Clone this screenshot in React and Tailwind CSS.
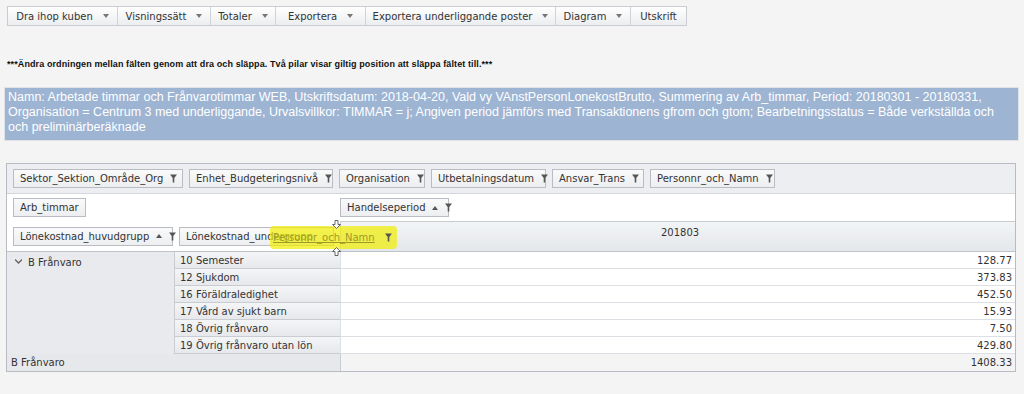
import React from "react";

const FilterIcon = () => (
	<svg width="7" height="9" viewBox="0 0 7 9" className="shrink-0">
		<path d="M0 0.5h7L4.3 4v4.5H2.7V4z" fill="#555" />
	</svg>
);

const SortUp = () => (
	<svg width="6" height="4" viewBox="0 0 6 4" className="shrink-0">
		<path d="M0 4L3 0l3 4z" fill="#555" />
	</svg>
);

const Caret = () => (
	<svg width="6" height="4" viewBox="0 0 6 4" className="shrink-0">
		<path d="M0 0h6L3 4z" fill="#777" />
	</svg>
);

const ToolButton = ({ label, width, menu = true }) => (
	<div
		className={`flex h-full items-center justify-center gap-[10px] border-r border-[#cfd2d6] last:border-r-0 ${width}`}
	>
		<span>{label}</span>
		{menu && <Caret />}
	</div>
);

const Chip = ({ label, sort = false, filter = true, className = "" }) => (
	<div
		className={`flex h-[19px] items-center gap-[7px] border border-[#b9bdc3] bg-gradient-to-b from-[#fafafa] to-[#eceef0] px-[6px] text-[#333] ${className}`}
	>
		<span className="whitespace-nowrap">{label}</span>
		{sort && <SortUp />}
		{filter && <FilterIcon />}
	</div>
);

const rows = [
	["10 Semester", "128.77"],
	["12 Sjukdom", "373.83"],
	["16 Föräldraledighet", "452.50"],
	["17 Vård av sjukt barn", "15.93"],
	["18 Övrig frånvaro", "7.50"],
	["19 Övrig frånvaro utan lön", "429.80"],
];

export default function App() {
	return (
		<div className="h-[394px] w-[1024px] overflow-hidden bg-[#f4f4f4] text-[#222]">
			{/* Toolbar */}
			<div className="pl-[7px] pt-[6px]">
				<div
					className="flex h-[20px] w-fit items-center border border-[#c9ccd0] bg-gradient-to-b from-[#ffffff] to-[#ecedef] text-[10px] text-[#333]"
					style={{ fontFamily: "'DejaVu Sans', sans-serif" }}
				>
					<ToolButton label="Dra ihop kuben" width="w-[110px]" />
					<ToolButton label="Visningssätt" width="w-[93px]" />
					<ToolButton label="Totaler" width="w-[65px]" />
					<ToolButton label="Exportera" width="w-[90px]" />
					<ToolButton label="Exportera underliggande poster" width="w-[190px]" />
					<ToolButton label="Diagram" width="w-[75px]" />
					<ToolButton label="Utskrift" width="w-[55px]" menu={false} />
				</div>
			</div>

			{/* Info */}
			<div
				className="mt-[32px] pl-[7px] text-[9px] font-bold leading-[12px] tracking-[0.1px] text-[#111]"
				style={{ fontFamily: "'Liberation Sans', sans-serif" }}
			>
				***Ändra ordningen mellan fälten genom att dra och släppa. Två pilar visar giltig position att släppa fältet till.***
			</div>

			{/* Description */}
			<div className="mx-[4px] mt-[17px] h-[54px] w-[1015px] border border-[#dfe3e8] bg-[#9db4d3] px-[3px] pt-[2px]">
				<p
					className="text-[12.5px] leading-[15px] text-white"
					style={{ fontFamily: "'Liberation Sans', sans-serif" }}
				>
					Namn: Arbetade timmar och Frånvarotimmar WEB, Utskriftsdatum: 2018-04-20, Vald vy VAnstPersonLonekostBrutto, Summering av Arb_timmar, Period: 20180301 - 20180331, Organisation = Centrum 3 med underliggande, Urvalsvillkor: TIMMAR = j; Angiven period jämförs med Transaktionens gfrom och gtom; Bearbetningsstatus = Både verkställda och och preliminärberäknade
				</p>
			</div>

			{/* Pivot grid */}
			<div
				className="relative ml-[6px] mt-[22px] w-[1010px] border border-[#b8bcc2] text-[10px] text-[#333]"
				style={{ fontFamily: "'DejaVu Sans', sans-serif" }}
			>
				{/* Filter fields */}
				<div className="flex h-[30px] items-center gap-[6px] border-b border-[#d3d6da] bg-[#eceef1] px-[6px]">
					<Chip label="Sektor_Sektion_Område_Org" className="w-[170px] justify-between" />
					<Chip label="Enhet_Budgeteringsnivå" className="w-[144px] justify-between" />
					<Chip label="Organisation" className="w-[86px] justify-between" />
					<Chip label="Utbetalningsdatum" className="w-[115px] justify-between" />
					<Chip label="Ansvar_Trans" className="w-[92px] justify-between" />
					<Chip label="Personnr_och_Namn" className="w-[125px] justify-between" />
				</div>

				{/* Data field + column field */}
				<div className="grid h-[27px] grid-cols-[333px_1fr] items-center bg-white">
					<div className="px-[6px]">
						<Chip label="Arb_timmar" filter={false} className="w-fit" />
					</div>
					<div>
						<Chip label="Handelseperiod" sort className="w-[109px] justify-between" />
					</div>
				</div>

				{/* Row fields + column header */}
				<div className="grid h-[31px] grid-cols-[333px_1fr] border-b border-[#bfc3c8] bg-white">
					<div className="flex items-center gap-[6px] px-[6px]">
						<Chip label="Lönekostnad_huvudgrupp" sort className="w-[160px] justify-between" />
						<Chip label="Lönekostnad_undergrupp" filter={false} className="w-[156px] overflow-hidden" />
					</div>
					<div className="border-l border-t border-[#c8ccd1] bg-gradient-to-b from-[#f2f4f6] to-[#e4e7eb] pl-[320px] pt-[3px]">
						201803
					</div>
				</div>

				{/* Body */}
				<div className="grid grid-cols-[168px_165px_1fr]">
					<div className="row-span-6 flex items-start gap-[6px] border-r border-[#c9ccd1] bg-[#e8eaed] pl-[8px] pt-[3px]">
						<svg width="7" height="5" viewBox="0 0 7 5" className="mt-[4px]">
							<path d="M0 0.5l3.5 3.5L7 0.5" stroke="#666" strokeWidth="1.4" fill="none" />
						</svg>
						<span>B Frånvaro</span>
					</div>
					{rows.map(([label, value]) => (
						<React.Fragment key={label}>
							<div className="col-start-2 flex h-[17px] items-center border-b border-[#c9ccd1] bg-gradient-to-b from-[#f4f5f7] to-[#e6e8eb] pl-[5px]">
								{label}
							</div>
							<div className="flex h-[17px] items-center justify-end border-b border-l border-[#dcdfe3] bg-white pr-[3px]">
								{value}
							</div>
						</React.Fragment>
					))}
					<div className="col-span-2 flex h-[17px] items-center bg-[#e6e8eb] pl-[4px]">B Frånvaro</div>
					<div className="flex h-[17px] items-center justify-end border-l border-[#c9ccd1] bg-[#f4f4f5] pr-[3px]">
						1408.33
					</div>
				</div>

				{/* Drag ghost */}
				<div className="absolute left-[263px] top-[62px] flex h-[23px] w-[127px] items-center gap-[10px] rounded-[4px] bg-[#f2ef00]/70 pl-[3px] text-[#9f9a2a]">
					<span className="whitespace-nowrap underline">Personnr_och_Namn</span>
					<FilterIcon />
				</div>
				<svg width="9" height="9" viewBox="0 0 9 9" className="absolute left-[325px] top-[56px]">
					<path d="M3 0.5h3v4h2.5L4.5 8.5 0.5 4.5H3z" fill="#fff" stroke="#555" strokeWidth="0.9" />
				</svg>
				<svg width="9" height="9" viewBox="0 0 9 9" className="absolute left-[325px] top-[83px]">
					<path d="M3 8.5h3v-4h2.5L4.5 0.5 0.5 4.5H3z" fill="#fff" stroke="#555" strokeWidth="0.9" />
				</svg>
			</div>
		</div>
	);
}
